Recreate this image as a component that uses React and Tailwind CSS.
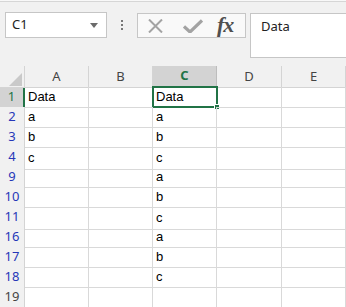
import React from "react";

const COLS = ["A", "B", "C", "D", "E"];
const ROWS = [
  { n: 1, a: "Data", c: "Data" },
  { n: 2, a: "a", c: "a" },
  { n: 3, a: "b", c: "b" },
  { n: 4, a: "c", c: "c", gap: true },
  { n: 9, c: "a" },
  { n: 10, c: "b" },
  { n: 11, c: "c", gap: true },
  { n: 16, c: "a" },
  { n: 17, c: "b" },
  { n: 18, c: "c" },
  { n: 19 },
];

const font = "font-['Segoe_UI','Noto_Sans',sans-serif]";
const cellFont = "font-['Liberation_Sans',Arial,sans-serif]";

function FormulaBar() {
  return (
    <div className="h-[66px] bg-[#f1f1f1]">
      <div className="h-[2px] bg-[#f8f8f8] border-b border-[#d6d6d6]" />
      <div className="flex items-start pt-[10px]">
        {/* name box */}
        <div className={`ml-[5px] w-[102px] h-[26px] bg-white border border-[#c6c6c6] flex items-center justify-between pl-[6px] pr-[8px] text-[13px] text-[#222] ${font}`}>
          <span>C1</span>
          <svg width="8" height="5" viewBox="0 0 8 5">
            <path d="M0 0h8L4 5z" fill="#6b6b6b" />
          </svg>
        </div>
        {/* grip dots */}
        <div className="w-[30px] h-[26px] flex flex-col items-center justify-center gap-[2px]">
          <span className="w-[2px] h-[2px] bg-[#777]" />
          <span className="w-[2px] h-[2px] bg-[#777]" />
          <span className="w-[2px] h-[2px] bg-[#777]" />
        </div>
        {/* cancel / enter / fx */}
        <div className="w-[109px] h-[25px] mt-[1px] bg-[#f9f9f9] border border-[#c6c6c6] flex items-center pl-[10px]">
          <svg width="15" height="14" viewBox="0 0 15 14">
            <path d="M1 0.5L14 13.5M14 0.5L1 13.5" stroke="#a3a3a3" strokeWidth="2" />
          </svg>
          <svg width="20" height="14" viewBox="0 0 20 14" className="ml-[20px]">
            <path d="M1 7.5L7 13L19 1.5" stroke="#a3a3a3" strokeWidth="3.2" fill="none" />
          </svg>
          <span className="ml-[14px] -mt-[2px] font-['Liberation_Serif','DejaVu_Serif',serif] italic font-bold text-[22px] leading-none text-[#4f4f4f] tracking-[-1px]">
            fx
          </span>
        </div>
        {/* formula input */}
        <div className={`ml-[4px] flex-1 h-[45px] mt-[1px] bg-white border border-[#c6c6c6] border-r-0 pl-[10px] pt-[3px] text-[13px] text-[#222] ${font}`}>
          Data
        </div>
      </div>
    </div>
  );
}

function Sheet() {
  const grid = "grid grid-cols-[25px_64px_64px_64px_65px_64px]";
  return (
    <div className="bg-white">
      {/* column headers */}
      <div className={`${grid} h-[21px] bg-[#f1f1f1] ${font} text-[13px] text-[#444]`}>
        <div className="relative border-r border-b border-[#d4d4d4]">
          <svg width="13" height="13" viewBox="0 0 13 13" className="absolute right-[2px] bottom-[1px]">
            <path d="M13 0V13H0z" fill="#c9c9c9" />
          </svg>
        </div>
        {COLS.map((c) =>
          c === "C" ? (
            <div key={c} className="bg-[#d3d3d3] border-r border-[#bdbdbd] border-b-2 border-b-[#217346] flex items-center justify-center font-bold text-[#217346]">
              {c}
            </div>
          ) : (
            <div key={c} className="border-r border-b border-[#d4d4d4] flex items-center justify-center">
              {c}
            </div>
          )
        )}
      </div>
      {ROWS.map((r) => (
        <div key={r.n} className={`${grid} h-[20px]`}>
          <div
            className={`flex items-center justify-center ${font} text-[13px] ${
              r.n === 1
                ? "bg-[#d3d3d3] text-[#217346] border-r-2 border-r-[#217346] border-b border-b-[#bdbdbd]"
                : "bg-[#f1f1f1] border-r border-[#d4d4d4] " +
                  (r.n === 19 ? "text-[#444] " : "text-[#2637b8] ") +
                  (r.gap ? "border-b-[3px] border-double" : "border-b")
            }`}
          >
            {r.n}
          </div>
          {COLS.map((c) => {
            const v = c === "A" ? r.a : c === "C" ? r.c : "";
            return (
              <div
                key={c}
                className={`relative border-r border-b border-[#d9d9d9] flex items-center pl-[3px] ${cellFont} text-[13px] text-black`}
              >
                {v}
                {r.n === 1 && c === "C" && (
                  <div className="absolute -left-[1px] -top-[1px] w-[66px] h-[22px] border-2 border-[#217346]">
                    <div className="absolute -right-[4px] -bottom-[4px] w-[6px] h-[6px] bg-[#217346] border border-white" />
                  </div>
                )}
              </div>
            );
          })}
        </div>
      ))}
    </div>
  );
}

export default function App() {
  return (
    <div className="w-[346px] h-[307px] overflow-hidden bg-white">
      <FormulaBar />
      <Sheet />
    </div>
  );
}
